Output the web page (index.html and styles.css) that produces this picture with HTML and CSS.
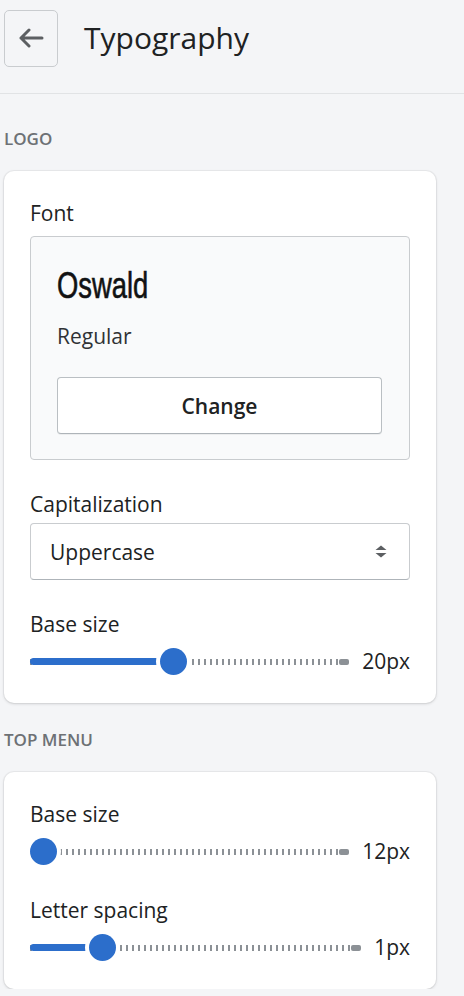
FILE: index.html
```html
<!DOCTYPE html>
<html lang="en">
<head>
    <meta charset="utf-8" />
    <meta name="viewport" content="width=device-width, initial-scale=1" />
    <title>Typography</title>
    <link rel="stylesheet" href="styles.css">
</head>
<body>
    <header class="topbar">
        <button class="back-button" aria-label="Back">
            <svg width="26" height="20" viewBox="0 0 26 20">
                <path d="M24 10H3M11 2L3 10l8 8" fill="none" stroke="#5c5f62" stroke-width="3" stroke-linecap="round" stroke-linejoin="round" />
            </svg>
        </button>
        <h1 class="title">Typography</h1>
    </header>

    <h2 class="section-label">Logo</h2>
    <section class="card">
        <div class="field-label">Font</div>
        <div class="font-picker">
            <div class="font-name"><span>Oswald</span></div>
            <div class="font-style">Regular</div>
            <button class="change-button">Change</button>
        </div>

        <div class="field-label field-gap">Capitalization</div>
        <div class="select">
            <span>Uppercase</span>
            <svg width="12" height="13" viewBox="0 0 12 13">
                <path d="M0.5 5L6 0.5 11.5 5z M0.5 8L11.5 8 6 12.5z" fill="#5c5f62" />
            </svg>
        </div>

        <div class="field-label field-gap">Base size</div>
        <div class="range">
            <div class="range-track" style="--value: 0.445">
                <span class="range-fill"></span>
                <span class="range-thumb"></span>
            </div>
            <span class="range-value">20px</span>
        </div>
    </section>

    <h2 class="section-label section-label-next">Top menu</h2>
    <section class="card">
        <div class="field-label">Base size</div>
        <div class="range">
            <div class="range-track" style="--value: 0">
                <span class="range-fill"></span>
                <span class="range-thumb"></span>
            </div>
            <span class="range-value">12px</span>
        </div>

        <div class="field-label field-gap-lg">Letter spacing</div>
        <div class="range">
            <div class="range-track" style="--value: 0.195">
                <span class="range-fill"></span>
                <span class="range-thumb"></span>
            </div>
            <span class="range-value">1px</span>
        </div>
    </section>
</body>
</html>
```

FILE: styles.css
```css
body {
    font-family: 'Segoe UI', 'Open Sans', 'Noto Sans', sans-serif;
    margin: 0;
    padding: 0;
    background-color: #f4f5f7;
    color: #202223;
    width: 464px;
}

.topbar {
    display: flex;
    align-items: center;
    box-sizing: border-box;
    height: 94px;
    padding: 10px 4px 27px;
    border-bottom: 1px solid #e1e3e5;
}

.back-button {
    width: 54px;
    height: 57px;
    display: flex;
    align-items: center;
    justify-content: center;
    background: transparent;
    border: 1.5px solid #c9cccf;
    border-radius: 5px;
    padding: 0;
}

.title {
    margin: 0 0 0 26px;
    font-size: 30px;
    font-weight: 400;
    line-height: 40px;
}

.section-label {
    margin: 33px 0 20px 4px;
    font-size: 17px;
    line-height: 24px;
    font-weight: 600;
    text-transform: uppercase;
    color: #6d7175;
}

.section-label-next {
    margin-top: 25px;
}

.card {
    margin: 0 28px 0 4px;
    padding: 28px 26px 28px;
    background: white;
    border-radius: 10px;
    box-shadow: 0 0 0 1px rgba(63, 63, 68, 0.05), 0 1px 3px rgba(63, 63, 68, 0.18);
}

.field-label {
    font-size: 21px;
    line-height: 28px;
}

.field-gap {
    margin-top: 30px;
}

.field-gap-lg {
    margin-top: 31px;
}

.font-picker {
    margin-top: 9px;
    padding: 27px 27px 25px 26px;
    background: #f9fafb;
    border: 1px solid #c9cccf;
    border-radius: 4px;
}

/* Oswald is not installed, squeeze a grotesque to its proportions */
.font-name {
    font-family: 'Liberation Sans', Arial, sans-serif;
    font-size: 36px;
    line-height: 44px;
    color: #111213;
}

.font-name span {
    display: inline-block;
    transform: scaleX(0.76);
    transform-origin: left center;
    -webkit-text-stroke: 0.6px currentColor;
}

.font-style {
    margin-top: 14px;
    font-size: 21px;
    line-height: 28px;
    color: #303235;
}

.change-button {
    display: block;
    width: 100%;
    height: 57px;
    margin-top: 27px;
    background: white;
    border: 1px solid #babfc3;
    border-bottom-color: #aeb4b9;
    border-radius: 4px;
    box-shadow: 0 1px 0 rgba(0, 0, 0, 0.05);
    font-family: inherit;
    font-size: 21px;
    font-weight: 600;
    color: #202223;
}

.select {
    display: flex;
    align-items: center;
    justify-content: space-between;
    height: 57px;
    margin-top: 5px;
    padding: 0 22px 0 19px;
    box-sizing: border-box;
    border: 1px solid #c9cccf;
    border-bottom-color: #aeb4b9;
    border-radius: 4px;
    font-size: 21px;
}

.range {
    display: flex;
    align-items: center;
    gap: 13px;
    margin-top: 9px;
}

.range-track {
    position: relative;
    flex: 1;
    height: 27px;
}

.range-track::before {
    content: "";
    position: absolute;
    left: 0;
    right: 10px;
    top: 11px;
    height: 6px;
    background: repeating-linear-gradient(90deg, #8c9196 0 2px, transparent 2px 6px);
}

.range-track::after {
    content: "";
    position: absolute;
    right: 0;
    top: 11px;
    width: 10px;
    height: 6px;
    border-radius: 2px;
    background: #8c9196;
}

.range-fill {
    position: absolute;
    left: 0;
    top: 10px;
    height: 7px;
    width: calc((100% - 27px) * var(--value) + 13px);
    border-radius: 4px;
    background: #2c6ecb;
}

.range-thumb {
    position: absolute;
    top: 0;
    left: calc((100% - 27px) * var(--value));
    width: 27px;
    height: 27px;
    border-radius: 50%;
    background: #2c6ecb;
    box-shadow: 0 0 0 4px white;
}

.range-value {
    font-size: 21px;
    line-height: 28px;
}
```
